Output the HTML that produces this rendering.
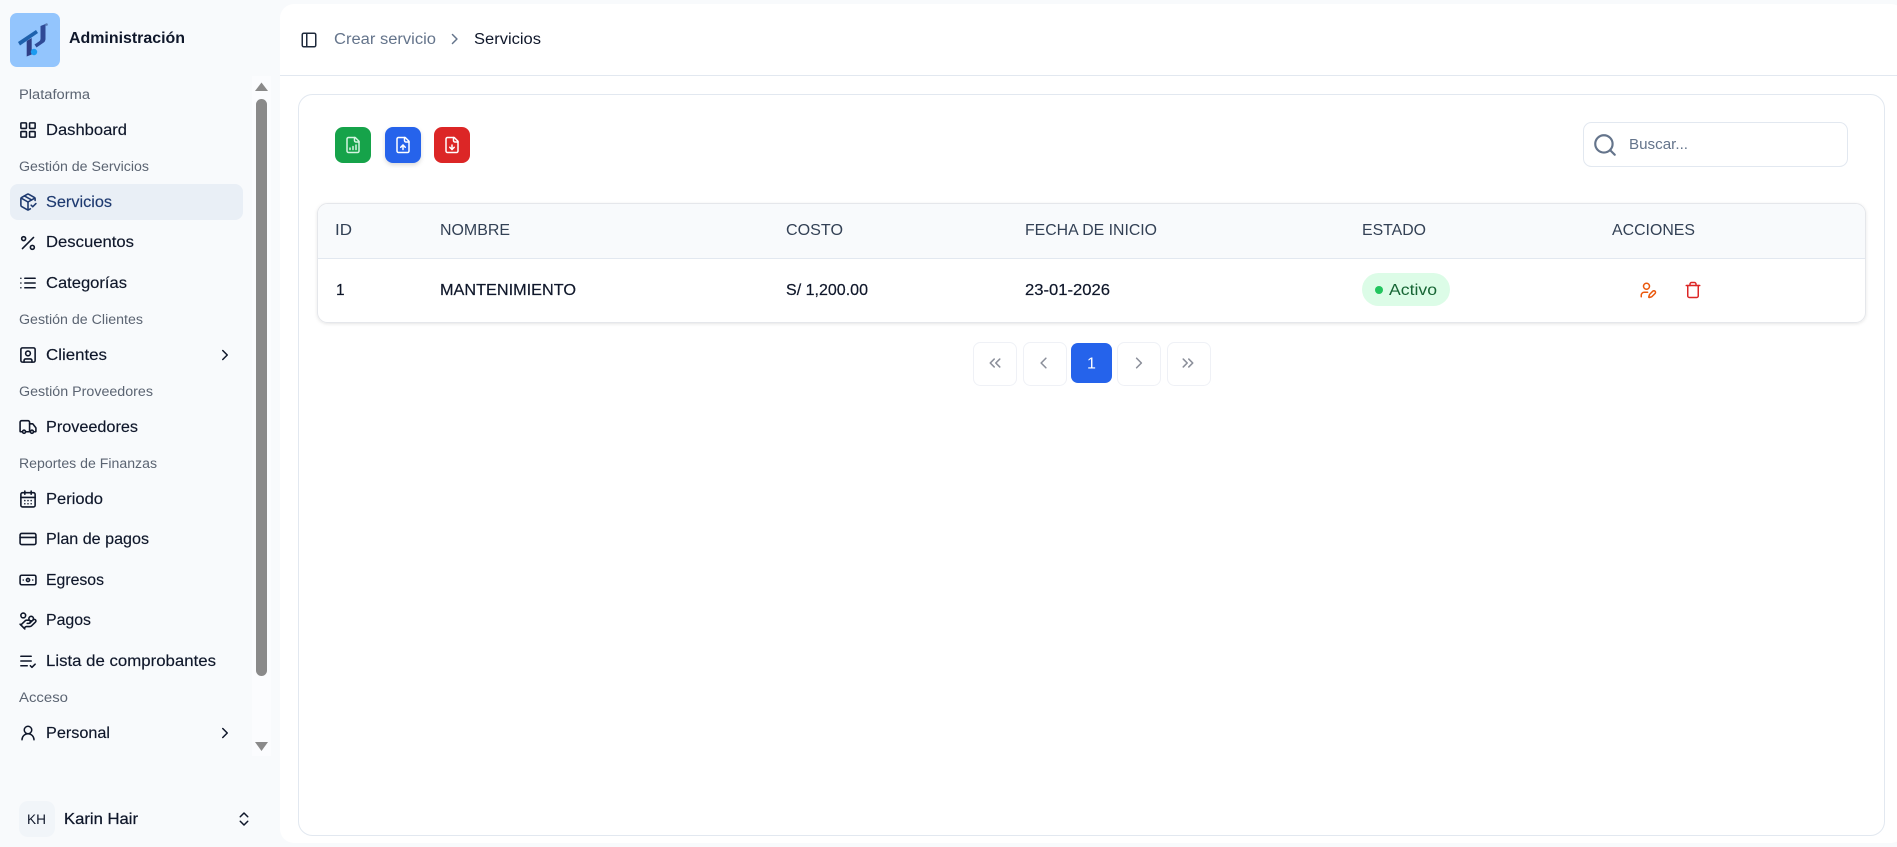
<!DOCTYPE html>
<html lang="es"><head><meta charset="utf-8"><title>Servicios</title>
<style>
html,body{margin:0;padding:0;width:1897px;height:847px;overflow:hidden;background:#f8fafc}
svg{display:block;font-family:"Liberation Sans",sans-serif}
.i{fill:none;stroke:#0f172a;stroke-width:2;stroke-linecap:round;stroke-linejoin:round}
.g{font-size:13.5px;fill:#5b6472}
.m{font-size:16px;fill:#0f172a;stroke:#0f172a;stroke-width:.15}
.th{font-size:15.5px;fill:#334155}
.td{font-size:15.5px;fill:#0f172a;stroke:#0f172a;stroke-width:.2}
</style></head><body>
<svg width="1897" height="847" viewBox="0 0 1897 847" xmlns="http://www.w3.org/2000/svg">
<defs>
<filter id="sh" x="-5%" y="-10%" width="110%" height="125%"><feDropShadow dx="0" dy="1" stdDeviation="1.5" flood-color="#000" flood-opacity=".1"/></filter>
<filter id="sh2" x="-30%" y="-30%" width="160%" height="170%"><feDropShadow dx="0" dy="2" stdDeviation="2" flood-color="#000" flood-opacity=".15"/></filter>
</defs>
<rect width="1897" height="847" fill="#f8fafc"/>
<rect x="280" y="4" width="1625" height="839" rx="14" fill="#fff"/>
<rect x="280" y="75" width="1617" height="1" fill="#e2e8f0"/>
<rect x="298.5" y="94.5" width="1586" height="741" rx="14" fill="#fff" stroke="#e2e8f0"/>

<!-- logo -->
<rect x="10" y="13" width="50" height="54" rx="7" fill="#93c5fd"/>
<path d="M26.7 41 L31.7 38 V54.5 L26.7 56.5Z" fill="#2f3f86"/>
<path d="M18 42 L36 30 L38 33 L20 45.5Z" fill="#1f62ad"/>
<path d="M40.5 26 L45.5 24 V39 Q45.5 41.5 43 43 L36.5 47.5 L34.5 44.5 L39 41.5 Q40.5 40.5 40.5 39Z" fill="#2f4a96"/>
<circle cx="46.5" cy="24.5" r="1.3" fill="#5b7db5"/>
<circle cx="34" cy="52" r="3.2" fill="#1d9bf0"/>

<text x="69" y="43" font-size="15.5" font-weight="700" fill="#0f172a" textLength="116" lengthAdjust="spacingAndGlyphs">Administración</text>

<!-- scrollbar -->
<rect x="252" y="76" width="19" height="680" fill="#fbfcfe"/>
<path d="M261.5 82.5 L268 91 H255Z" fill="#8a8a8a"/>
<rect x="256" y="99" width="11" height="577" rx="5.5" fill="#8a8a8a"/>
<path d="M255 742 H268 L261.5 751Z" fill="#8a8a8a"/>

<!-- active -->
<rect x="10" y="184" width="233" height="36" rx="8" fill="#e9eff6"/>

<!-- groups -->
<text class="g" x="19" y="99" textLength="71" lengthAdjust="spacingAndGlyphs">Plataforma</text>
<text class="g" x="19" y="171" textLength="130" lengthAdjust="spacingAndGlyphs">Gestión de Servicios</text>
<text class="g" x="19" y="324" textLength="124" lengthAdjust="spacingAndGlyphs">Gestión de Clientes</text>
<text class="g" x="19" y="396" textLength="134" lengthAdjust="spacingAndGlyphs">Gestión Proveedores</text>
<text class="g" x="19" y="468" textLength="138" lengthAdjust="spacingAndGlyphs">Reportes de Finanzas</text>
<text class="g" x="19" y="702" textLength="49" lengthAdjust="spacingAndGlyphs">Acceso</text>

<!-- items -->
<text class="m" x="46" y="135" textLength="81" lengthAdjust="spacingAndGlyphs">Dashboard</text>
<text class="m" x="46" y="207" textLength="66" lengthAdjust="spacingAndGlyphs" style="fill:#1e3a70;stroke:#1e3a70">Servicios</text>
<text class="m" x="46" y="247" textLength="88" lengthAdjust="spacingAndGlyphs">Descuentos</text>
<text class="m" x="46" y="288" textLength="81" lengthAdjust="spacingAndGlyphs">Categorías</text>
<text class="m" x="46" y="360" textLength="61" lengthAdjust="spacingAndGlyphs">Clientes</text>
<text class="m" x="46" y="432" textLength="92" lengthAdjust="spacingAndGlyphs">Proveedores</text>
<text class="m" x="46" y="504" textLength="57" lengthAdjust="spacingAndGlyphs">Periodo</text>
<text class="m" x="46" y="544" textLength="103" lengthAdjust="spacingAndGlyphs">Plan de pagos</text>
<text class="m" x="46" y="585" textLength="58" lengthAdjust="spacingAndGlyphs">Egresos</text>
<text class="m" x="46" y="625" textLength="45" lengthAdjust="spacingAndGlyphs">Pagos</text>
<text class="m" x="46" y="666" textLength="170" lengthAdjust="spacingAndGlyphs">Lista de comprobantes</text>
<text class="m" x="46" y="738" textLength="64" lengthAdjust="spacingAndGlyphs">Personal</text>

<!-- sidebar icons -->
<svg class="i" x="18.5" y="120.5" width="19" height="19" viewBox="0 0 24 24"><rect x="3" y="3" width="7" height="7" rx="1"/><rect x="14" y="3" width="7" height="7" rx="1"/><rect x="14" y="14" width="7" height="7" rx="1"/><rect x="3" y="14" width="7" height="7" rx="1"/></svg>
<svg class="i" x="18.5" y="192.5" width="19" height="19" viewBox="0 0 24 24" style="stroke:#1e3a70"><path d="m16 16 2 2 4-4"/><path d="M21 10V8a2 2 0 0 0-1-1.73l-7-4a2 2 0 0 0-2 0l-7 4A2 2 0 0 0 3 8v8a2 2 0 0 0 1 1.73l7 4a2 2 0 0 0 2 0l2-1.14"/><path d="m7.5 4.27 9 5.15"/><path d="M3.29 7 12 12l8.71-5"/><path d="M12 22V12"/></svg>
<svg class="i" x="18.5" y="233.5" width="19" height="19" viewBox="0 0 24 24"><path d="M19 5 5 19"/><circle cx="6.5" cy="6.5" r="2.5"/><circle cx="17.5" cy="17.5" r="2.5"/></svg>
<svg class="i" x="18.5" y="273.5" width="19" height="19" viewBox="0 0 24 24"><path d="M3 12h.01M3 18h.01M3 6h.01M8 12h13M8 18h13M8 6h13"/></svg>
<svg class="i" x="18.5" y="345.5" width="19" height="19" viewBox="0 0 24 24"><rect x="3" y="3" width="18" height="18" rx="2"/><circle cx="12" cy="10" r="3"/><path d="M7 21v-2a2 2 0 0 1 2-2h6a2 2 0 0 1 2 2v2"/></svg>
<svg class="i" x="18.5" y="417.5" width="19" height="19" viewBox="0 0 24 24"><path d="M14 18V6a2 2 0 0 0-2-2H4a2 2 0 0 0-2 2v11a1 1 0 0 0 1 1h2"/><path d="M15 18H9"/><path d="M19 18h2a1 1 0 0 0 1-1v-3.65a1 1 0 0 0-.22-.624l-3.48-4.35A1 1 0 0 0 17.52 8H14"/><circle cx="17" cy="18" r="2"/><circle cx="7" cy="18" r="2"/></svg>
<svg class="i" x="18.5" y="489.5" width="19" height="19" viewBox="0 0 24 24"><path d="M8 2v4M16 2v4"/><rect x="3" y="4" width="18" height="18" rx="2"/><path d="M3 10h18M8 14h.01M12 14h.01M16 14h.01M8 18h.01M12 18h.01M16 18h.01"/></svg>
<svg class="i" x="18.5" y="529.5" width="19" height="19" viewBox="0 0 24 24"><rect x="2" y="5" width="20" height="14" rx="2"/><path d="M2 10h20"/></svg>
<svg class="i" x="18.5" y="570.5" width="19" height="19" viewBox="0 0 24 24"><rect x="2" y="6" width="20" height="12" rx="2"/><circle cx="12" cy="12" r="2"/><path d="M6 12h.01M18 12h.01"/></svg>
<svg class="i" x="18.5" y="611.5" width="19" height="19" viewBox="0 0 24 24"><path d="M11 15h2a2 2 0 1 0 0-4h-3c-.6 0-1.1.2-1.4.6L3 17"/><path d="m7 21 1.6-1.4c.3-.4.8-.6 1.4-.6h4c1.1 0 2.1-.4 2.8-1.2l4.6-4.4a2 2 0 0 0-2.75-2.91l-4.2 3.9"/><path d="m2 16 6 6"/><circle cx="16" cy="9" r="2.9"/><circle cx="6" cy="5" r="3"/></svg>
<svg class="i" x="18.5" y="651.5" width="19" height="19" viewBox="0 0 24 24"><path d="M11 18H3"/><path d="m15 18 2 2 4-4"/><path d="M16 12H3"/><path d="M16 6H3"/></svg>
<svg class="i" x="19" y="724" width="18" height="18" viewBox="0 0 24 24"><circle cx="12" cy="8" r="5"/><path d="M20 21a8 8 0 0 0-16 0"/></svg>
<svg class="i" x="216" y="346" width="18" height="18" viewBox="0 0 24 24"><path d="m9 18 6-6-6-6"/></svg>
<svg class="i" x="216" y="724" width="18" height="18" viewBox="0 0 24 24"><path d="m9 18 6-6-6-6"/></svg>

<!-- user -->
<rect x="19" y="801" width="36" height="36" rx="9" fill="#f1f5f9"/>
<text x="27" y="824" font-size="14" fill="#0f172a" textLength="19" lengthAdjust="spacingAndGlyphs">KH</text>
<text x="64" y="824" font-size="16" fill="#0f172a" stroke="#0f172a" stroke-width=".25" textLength="74" lengthAdjust="spacingAndGlyphs">Karin Hair</text>
<svg class="i" x="235" y="810" width="18" height="18" viewBox="0 0 24 24"><path d="m7 15 5 5 5-5"/><path d="m7 9 5-5 5 5"/></svg>

<!-- header -->
<svg class="i" x="300" y="31" width="18" height="18" viewBox="0 0 24 24" style="stroke:#1e293b"><rect x="3" y="3" width="18" height="18" rx="2"/><path d="M9 3v18"/></svg>
<text x="334" y="44" font-size="15.5" fill="#64748b" textLength="102" lengthAdjust="spacingAndGlyphs">Crear servicio</text>
<svg class="i" x="445.7" y="30" width="18" height="18" viewBox="0 0 24 24" style="stroke:#64748b"><path d="m9 18 6-6-6-6"/></svg>
<text x="474" y="44" font-size="15.5" fill="#0f172a" textLength="67" lengthAdjust="spacingAndGlyphs">Servicios</text>

<!-- action buttons -->
<rect x="335" y="127" width="36" height="36" rx="8" fill="#16a34a"/>
<svg class="i" x="344" y="136" width="18" height="18" viewBox="0 0 24 24" style="stroke:#d6f5e2"><path d="M15 2H6a2 2 0 0 0-2 2v16a2 2 0 0 0 2 2h12a2 2 0 0 0 2-2V7Z"/><path d="M14 2v4a2 2 0 0 0 2 2h4"/><path d="M8 18v-2M12 18v-4M16 18v-6"/></svg>
<rect x="385" y="127" width="36" height="36" rx="8" fill="#2563eb" filter="url(#sh2)"/>
<svg class="i" x="394" y="136" width="18" height="18" viewBox="0 0 24 24" style="stroke:#fff"><path d="M15 2H6a2 2 0 0 0-2 2v16a2 2 0 0 0 2 2h12a2 2 0 0 0 2-2V7Z"/><path d="M14 2v4a2 2 0 0 0 2 2h4"/><path d="M12 12v6"/><path d="m15 15-3-3-3 3"/></svg>
<rect x="434" y="127" width="36" height="36" rx="8" fill="#dc2626"/>
<svg class="i" x="443" y="136" width="18" height="18" viewBox="0 0 24 24" style="stroke:#fff"><path d="M15 2H6a2 2 0 0 0-2 2v16a2 2 0 0 0 2 2h12a2 2 0 0 0 2-2V7Z"/><path d="M14 2v4a2 2 0 0 0 2 2h4"/><path d="M12 18v-6"/><path d="m9 15 3 3 3-3"/></svg>

<!-- search -->
<rect x="1583.5" y="122.5" width="264" height="44" rx="8" fill="#fff" stroke="#e2e8f0"/>
<svg class="i" x="1592" y="132" width="26" height="26" viewBox="0 0 24 24" style="stroke:#64748b"><circle cx="11" cy="11" r="8"/><path d="m21 21-4.3-4.3"/></svg>
<text x="1629" y="149" font-size="15" fill="#64748b" textLength="59" lengthAdjust="spacingAndGlyphs">Buscar...</text>

<!-- table -->
<rect x="317.5" y="203.5" width="1548" height="119" rx="10" fill="#fff" stroke="#e5e7eb" filter="url(#sh)"/>
<path d="M318 258V214a10 10 0 0 1 10-10H1855a10 10 0 0 1 10 10V258Z" fill="#f8fafc"/>
<rect x="318" y="258" width="1547" height="1" fill="#e2e8f0"/>
<text class="th" x="335" y="235" textLength="17" lengthAdjust="spacingAndGlyphs">ID</text>
<text class="th" x="440" y="235" textLength="70" lengthAdjust="spacingAndGlyphs">NOMBRE</text>
<text class="th" x="786" y="235" textLength="57" lengthAdjust="spacingAndGlyphs">COSTO</text>
<text class="th" x="1025" y="235" textLength="132" lengthAdjust="spacingAndGlyphs">FECHA DE INICIO</text>
<text class="th" x="1362" y="235" textLength="64" lengthAdjust="spacingAndGlyphs">ESTADO</text>
<text class="th" x="1612" y="235" textLength="83" lengthAdjust="spacingAndGlyphs">ACCIONES</text>
<text class="td" x="336" y="295">1</text>
<text class="td" x="440" y="295" textLength="136" lengthAdjust="spacingAndGlyphs">MANTENIMIENTO</text>
<text class="td" x="786" y="295" textLength="82" lengthAdjust="spacingAndGlyphs">S/ 1,200.00</text>
<text class="td" x="1025" y="295" textLength="85" lengthAdjust="spacingAndGlyphs">23-01-2026</text>
<rect x="1362" y="273" width="88" height="33" rx="16.5" fill="#dcfce7"/>
<circle cx="1379" cy="290" r="4" fill="#22c55e"/>
<text x="1389" y="295" font-size="15.5" fill="#166534" textLength="48" lengthAdjust="spacingAndGlyphs">Activo</text>
<svg class="i" x="1639" y="281" width="18" height="18" viewBox="0 0 24 24" style="stroke:#ea580c"><path d="M11.5 15H7a4 4 0 0 0-4 4v2"/><path d="M21.378 16.626a1 1 0 0 0-3.004-3.004l-4.01 4.012a2 2 0 0 0-.506.854l-.837 2.87a.5.5 0 0 0 .62.62l2.87-.837a2 2 0 0 0 .854-.506z"/><circle cx="10" cy="7" r="4"/></svg>
<svg class="i" x="1684" y="281" width="18" height="18" viewBox="0 0 24 24" style="stroke:#dc2626"><path d="M3 6h18"/><path d="M19 6v14c0 1-1 2-2 2H7c-1 0-2-1-2-2V6"/><path d="M8 6V4c0-1 1-2 2-2h4c1 0 2 1 2 2v2"/></svg>

<!-- pagination -->
<g fill="#fff" stroke="#eff1f6">
<rect x="973.5" y="342.5" width="43" height="43" rx="7"/>
<rect x="1023.5" y="342.5" width="43" height="43" rx="7"/>
<rect x="1117.5" y="342.5" width="43" height="43" rx="7"/>
<rect x="1167.5" y="342.5" width="43" height="43" rx="7"/>
</g>
<rect x="1071" y="343" width="41" height="40" rx="7" fill="#2563eb"/>
<text x="1091.5" y="368.5" font-size="16" fill="#fff" text-anchor="middle">1</text>
<svg class="i" x="985.5" y="353.5" width="19" height="19" viewBox="0 0 24 24" style="stroke:#8b8f9a"><path d="m11 17-5-5 5-5"/><path d="m18 17-5-5 5-5"/></svg>
<svg class="i" x="1034" y="353.5" width="19" height="19" viewBox="0 0 24 24" style="stroke:#8b8f9a"><path d="m15 18-6-6 6-6"/></svg>
<svg class="i" x="1129.5" y="353.5" width="19" height="19" viewBox="0 0 24 24" style="stroke:#8b8f9a"><path d="m9 18 6-6-6-6"/></svg>
<svg class="i" x="1178.5" y="353.5" width="19" height="19" viewBox="0 0 24 24" style="stroke:#8b8f9a"><path d="m6 17 5-5-5-5"/><path d="m13 17 5-5-5-5"/></svg>
</svg>
</body></html>
